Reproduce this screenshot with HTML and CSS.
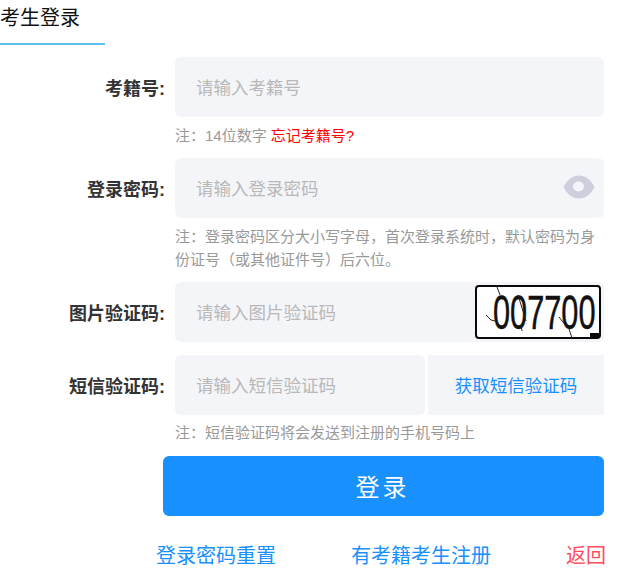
FILE: index.html
```html
<!DOCTYPE html>
<html lang="zh-CN">
<head>
	<meta charset="UTF-8">
	<title>考生登录</title>
	<link rel="stylesheet" href="styles.css">
</head>
<body>
	<section class="warp">
		<header class="tabBar">
			<span class="tabItem">考生登录</span>
		</header>
		<form action="" class="loginForm">
			<div class="row">
				<label class="rowLabel">考籍号:</label>
				<input type="text" class="ipt" placeholder="请输入考籍号">
			</div>
			<p class="note note1">注：14位数字 <a href="#" class="forgot">忘记考籍号?</a></p>

			<div class="row">
				<label class="rowLabel">登录密码:</label>
				<div class="iptBox">
					<input type="password" class="ipt" placeholder="请输入登录密码">
					<svg class="eye" viewBox="0 0 32 24" width="32" height="24">
						<path d="M0.500 12C4 5 9.500 0.500 16 0.500S28 5 31.500 12C28 19 22.500 23.500 16 23.500S4 19 0.500 12z" fill="#cdcfdc"/>
						<ellipse cx="15.500" cy="11.500" rx="5.500" ry="5" fill="#f4f5f9"/>
					</svg>
				</div>
			</div>
			<p class="note note2">注：登录密码区分大小写字母，首次登录系统时，默认密码为身份证号（或其他证件号）后六位。</p>

			<div class="row">
				<label class="rowLabel">图片验证码:</label>
				<div class="iptBox">
					<input type="text" class="ipt" placeholder="请输入图片验证码">
					<svg class="captcha" viewBox="0 0 126 54" width="126" height="54">
						<rect x="1" y="1" width="124" height="52" rx="3" fill="#fff" stroke="#0a0a0a" stroke-width="2"/>
						<rect x="115" y="48" width="9" height="5" fill="#0a0a0a"/>
						<text transform="translate(18 43.500) scale(0.640 1)" class="captchaText">007700</text>
						<path d="M11 30l5 5 4 1M22 2l3 8M43 10l8 26M84 32l8 10M94 44l3 9M46 40l1 6" stroke="#222" stroke-width="1" fill="none"/>
					</svg>
				</div>
			</div>

			<div class="row smsRow">
				<label class="rowLabel">短信验证码:</label>
				<input type="text" class="ipt smsIpt" placeholder="请输入短信验证码">
				<a href="#" class="smsBtn">获取短信验证码</a>
			</div>
			<p class="note note3">注：短信验证码将会发送到注册的手机号码上</p>

			<input type="button" value="登录" class="btnIpt">

			<div class="links">
				<a href="#">登录密码重置</a>
				<a href="#">有考籍考生注册</a>
				<a href="#" class="back">返回</a>
			</div>
		</form>
	</section>
</body>
</html>
```

FILE: styles.css
```css
body{
	margin:0;
	background:#fff;
	font-family:"Liberation Sans","Noto Sans CJK SC",sans-serif;
}
p{
	margin:0;
}
a{
	text-decoration:none;
}
input{
	border:0;
	outline:none;
	font-family:inherit;
}
.warp{
	width:621px;
	height:586px;
	overflow:hidden;
}
.tabBar{
	height:45px;
}
.tabItem{
	display:block;
	width:105px;
	height:43px;
	line-height:37px;
	font-size:20px;
	color:#111;
	border-bottom:2px solid #5fc0ee;
}
.loginForm{
	width:604px;
	padding-top:12px;
}
.row{
	display:flex;
	height:60px;
	align-items:center;
}
.rowLabel{
	flex:none;
	width:165px;
	margin-right:10px;
	text-align:right;
	font-size:18px;
	font-weight:bold;
	color:#333;
}
.ipt{
	display:block;
	box-sizing:border-box;
	width:100%;
	height:60px;
	padding:3px 0 0 21px;
	background:#f4f5f9;
	border-radius:6px;
	font-size:17.500px;
	color:#333;
}
.ipt::placeholder{
	color:#b8b8b8;
	opacity:1;
}
.iptBox{
	position:relative;
	flex:1;
}
.eye{
	position:absolute;
	right:9px;
	top:17px;
}
.captcha{
	position:absolute;
	right:3px;
	top:3px;
}
.captchaText{
	font-family:"Liberation Sans",sans-serif;
	font-size:48px;
	fill:#111;
	stroke:#111;
	stroke-width:0.500px;
}
.note{
	margin-left:175px;
	font-size:15px;
	line-height:23px;
	color:#999;
}
.forgot{
	color:#f00;
}
.note1{
	padding:7px 0 11px;
}
.note2{
	padding:7px 0 11px;
	width:429px;
}
.note3{
	padding:6px 0 12px;
}
.smsRow{
	margin-top:13px;
}
.smsIpt{
	width:250px;
	flex:none;
}
.smsBtn{
	flex:none;
	box-sizing:border-box;
	width:176px;
	height:60px;
	margin-left:3px;
	padding-top:2px;
	line-height:58px;
	text-align:center;
	background:#f4f5f9;
	font-size:17.500px;
	color:#1890ff;
}
.btnIpt{
	display:block;
	width:441px;
	height:60px;
	margin-left:163px;
	padding:0 2px 2px 0;
	background:#1890ff;
	border-radius:6px;
	color:#fff;
	font-size:24px;
	letter-spacing:3px;
	cursor:pointer;
}
.links{
	display:flex;
	justify-content:space-between;
	margin:27px -2px 0 156px;
	font-size:20px;
	line-height:26px;
}
.links a{
	color:#1890ff;
}
.links .back{
	color:#ff4d5f;
}
```
